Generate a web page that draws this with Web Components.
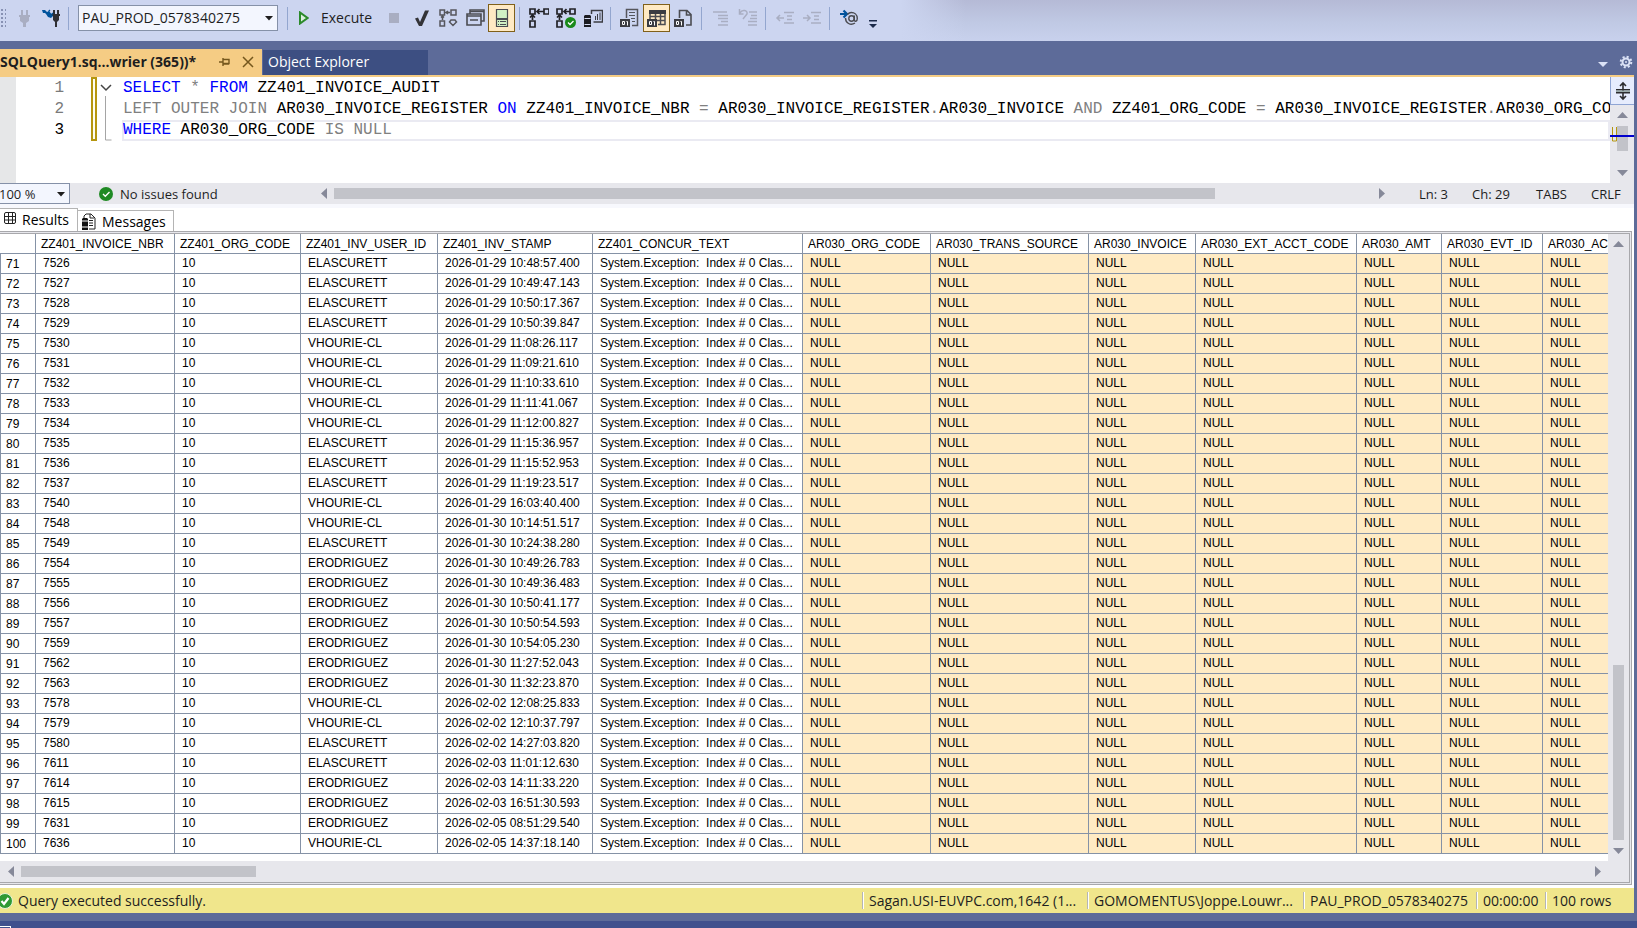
<!DOCTYPE html>
<html lang="en">
<head>
<meta charset="utf-8">
<title>SQLQuery1.sql</title>
<style>
  html, body {
    height: 100%;
    margin: 0;
  }
  body {
    font: 14px/20px "Open Sans", "Noto Sans", sans-serif;
    color: #1e1e1e;
    overflow: hidden;
    --chrome: #5d6b99;
    --toolbar: #ccd5f0;
    --active-tab: #f5cc84;
    --track: #e7e7ec;
    --thumb: #c2c3c9;
    --arrow: #868999;
    --grid-line: #8592a6;
  }
</style>
</head>
<body>
<query-window></query-window>

<script>
const BADGE = `<path d="M0 11h10v8H0z" fill="#3b3c42"/><path d="M2.500 13.500h2v3h-2zM6.500 13.500h1v4" fill="none" stroke="#fff"/>`;

const ICONS = {
  plug: `<g fill="#a9aec2"><path d="M7 2h2v5H7zM12 2h2v5h-2zM5 7h11v2h-1v4l-3 2v4H9v-4l-3-2V9H5z"/></g>`,
  plugs: `<g fill="#2f2f33"><path d="M12 2h2v4h-2zM16 2h2v4h-2zM10 6h9v2h-1v4l-2 2v5h-2v-5l-2-2V8h-2z"/></g><path d="M1 2h3l2 2 2-1 4 5-2 2-3-1-2-3-1-1H2z" fill="#00539c"/><path d="M7.500 3.500L9 2M10.500 6.500L12 5" stroke="#00539c" stroke-width="1.200"/>`,
  stop: `<path d="M5 5h10v10H5z" fill="#a9aec2"/>`,
  check: `<path d="M4 10.500l3-1 2 4.500 5-11.500h4L11 18H8z" fill="#333337"/>`,
  plan: `<g fill="none" stroke="#55565c" stroke-width="1.500"><path d="M2 2h4.500v5H2zM13 2h5v5h-5zM2 13h4.500v5H2zM8 4.500h4M4.500 12V8M10 3l-2 1.500L10 6M3 9.500L4.500 8 6 9.500"/><path d="M13 12h4l1.500 2-3.500 3.500-3.500-3.500z"/></g>`,
  windows: `<g fill="none" stroke="#4b4c52" stroke-width="1.600"><path d="M5 6V2h14v11h-3"/><path d="M2 6h14v11H2z"/><path d="M2 8h14M5 3.500h14M5 12h8"/></g>`,
  pane: `<path d="M4.500 1.500h11v17h-11z" fill="#d1f0c4" stroke="#4b4c52" stroke-width="1.200"/><path d="M4 11h12" stroke="#4b4c52" stroke-width="2"/><path d="M6 13.500h1M8 13.500h6M6 16.500h1M8 16.500h6" stroke="#4b4c52"/>`,
  planLive: `<g fill="none" stroke="#222226" stroke-width="1.700"><path d="M1 1h5v5H1zM15 1h5v5h-5zM1 13h5v6H1zM8 3.500h7M3.500 12V7M10.500 1L8 3.500 10.500 6M1 9.500L3.500 7 6 9.500"/></g>`,
  planOk: `<g fill="none" stroke="#222226" stroke-width="1.700"><path d="M1 1h5v5H1zM14 1h5v5h-5zM1 13h5v6H1zM8 3.500h6M3.500 12V7M10.500 1L8 3.500 10.500 6M1 9.500L3.500 7 6 9.500"/></g><circle cx="14.500" cy="14.500" r="5.500" fill="#1a8a1a"/><path d="M12 14.500l2 2 3.500-3.500" fill="none" stroke="#fff" stroke-width="1.300"/>`,
  stats: `<path d="M8.500 6V2.500h11v11.500h-9" fill="none" stroke="#3b3c42" stroke-width="1.500"/><path d="M12.500 8v4M14.500 6v6M17 4.500V12" stroke="#3b3c42"/><path d="M1 8l1-1h5l1 1v11H1z" fill="#1b1c22"/><path d="M1.500 10.500h6M1.500 16.500h6" stroke="#d6dcf2"/>`,
  toText: `<path d="M6.500 10V1.500h11v16H12" fill="none" stroke="#55565c" stroke-width="1.500"/><path d="M9 4.500h6M9 7.500h6M11 10.500h4M12 13.500h3" stroke="#55565c"/>${BADGE}`,
  toGrid: `<path d="M3 3v8M3 8.500h15M10 12.500h8M8.500 4v7M13.500 4v12.500M18 4v12.500h-7" fill="none" stroke="#4b4c52" stroke-width="1.500"/><path d="M2 2h17v4H2z" fill="#3b3c42"/>${BADGE}`,
  toFile: `<path d="M5.500 10V2.500H13l4 4v10.500h-5M12.500 3v4h5" fill="none" stroke="#4b4c52" stroke-width="1.600"/>${BADGE}`,
  comment: `<path d="M2 4h14M7 7.500h10M7 10.500h10M10 13.500h7M7 17h10" stroke="#a9aec2" stroke-width="1.500"/>`,
  uncomment: `<path d="M11 4h8M13 7.500h6M12 10.500h7M10 13.500h9M10 17h9M1.500 1v5h4M2 5c2-4 8-3 7 1l-4 5" fill="none" stroke="#a9aec2" stroke-width="1.500"/>`,
  outdent: `<path d="M9 4.500h10M12 8h5M12 11.500h5M9 15h10M9 10H2M5 7l-3 3 3 3" fill="none" stroke="#a9aec2" stroke-width="1.500"/>`,
  indent: `<path d="M9 4.500h10M12 8h5M12 11.500h5M9 15h10M1 10h7M5 7l3 3-3 3" fill="none" stroke="#a9aec2" stroke-width="1.500"/>`,
  params: `<path d="M1 6h6M4.500 2.500L8 6l-3.500 3.500" fill="none" stroke="#00539c" stroke-width="2.200"/><g fill="none" stroke="#4b4c52" stroke-width="1.400"><circle cx="12.500" cy="10.500" r="2.700"/><path d="M15.300 7.500v4c0 3 3 2 3-1 0-4-3-6-6-6-2 0-3 1-4 2M6.500 10c0 5 5 8 9.500 5"/></g>`,
  gear: `<circle cx="10" cy="10" r="3.500" fill="none" stroke="#dbe2f6" stroke-width="2"/><circle cx="10" cy="10" r="5.300" fill="none" stroke="#dbe2f6" stroke-width="2" stroke-dasharray="2.100 2.060"/><circle cx="10" cy="10" r="1" fill="#dbe2f6"/>`,
  pin: `<path d="M5 10h4M9 6v8M9 7.500h6v4H9M9 12h6" fill="none" stroke="#75571d" stroke-width="1.400"/>`,
  close: `<path d="M5 5l10 10M15 5L5 15" stroke="#75571d" stroke-width="1.500"/>`,
  ok: `<circle cx="10" cy="10" r="7" fill="#1f8a24"/><path d="M7 10l2.300 2.300L13.500 8" fill="none" stroke="#fff" stroke-width="1.300"/>`,
  done: `<circle cx="10" cy="10" r="7.500" fill="#2f9a35" stroke="#e7f3dc"/><path d="M6.500 10l2.500 3 4.500-6" fill="none" stroke="#fff" stroke-width="2.200"/>`,
  grid: `<rect x="4.500" y="2.500" width="11" height="11" rx="1.500" fill="none" stroke="#222"/><path d="M8.500 2v12M12.500 2v12M4 6.500h12M4 10h12" stroke="#222"/>`,
  messages: `<path d="M6 6V4l2-2h5l4 4v11h-6M12 2v4h4" fill="none" stroke="#222"/><path d="M11 8.500h4M11 11h4M11 13.500h4" stroke="#222"/><path d="M4 7l1-1h4l1 1v11H4z" fill="#111"/><path d="M4 9h6M4 15h6" stroke="#fff"/>`,
  split: `<path d="M10 2v16M7 5l3-3 3 3M7 15l3 3 3-3" fill="none" stroke="#2d2d30" stroke-width="1.600"/><path d="M3 8h14v1.500H3zM3 11h14v1.500H3z" fill="#2d2d30"/><path d="M3 9.500h14V11H3z" fill="#9aa"/>`
};

class UiIcon extends HTMLElement {
  connectedCallback() {
    this.attachShadow({ mode: "open" }).innerHTML = `
      <style>
        :host { display: inline-flex; flex: none; width: 20px; height: 20px; }
        svg { width: 20px; height: 20px; }
      </style>
      <svg viewBox="0 0 20 20" aria-hidden="true">${ICONS[this.getAttribute("name")] || ""}</svg>`;
  }
}
customElements.define("ui-icon", UiIcon);

class ToolButton extends HTMLElement {
  connectedCallback() {
    this.attachShadow({ mode: "open" }).innerHTML = `
      <style>
        :host { display: flex; flex: none; }
        button {
          box-sizing: border-box;
          display: flex;
          align-items: center;
          justify-content: center;
          width: 27px;
          height: 28px;
          padding: 0;
          border: 1px solid transparent;
          background: none;
        }
        :host([pressed]) button {
          border-color: #80601a;
          background: #ffeac4;
        }
      </style>
      <button aria-label="${this.getAttribute("label")}" ${this.hasAttribute("off") ? "disabled" : ""}>
        <ui-icon name="${this.getAttribute("icon")}"></ui-icon>
      </button>`;
  }
}
customElements.define("tool-button", ToolButton);

class ComboBox extends HTMLElement {
  connectedCallback() {
    this.attachShadow({ mode: "open" }).innerHTML = `
      <style>
        :host { display: block; position: relative; flex: none; }
        select {
          box-sizing: border-box;
          width: 100%;
          height: 100%;
          padding: 0 20px 0 3px;
          border: 1px solid #8591a8;
          border-radius: 0;
          background: #f3f6fe;
          color: inherit;
          font: inherit;
          appearance: none;
        }
        svg {
          position: absolute;
          right: 5px;
          top: calc(50% - 2px);
          width: 8px;
          height: 5px;
          pointer-events: none;
        }
      </style>
      <select aria-label="${this.getAttribute("label")}"><option>${this.getAttribute("value")}</option></select>
      <svg viewBox="0 0 8 5"><path d="M0 0h8L4 4.500z" fill="#1e1e1e"/></svg>`;
  }
}
customElements.define("combo-box", ComboBox);

// start and size are percentages of the track
class ScrollBar extends HTMLElement {
  connectedCallback() {
    const vertical = this.hasAttribute("vertical");
    const back = vertical ? "M5 13h11l-5.500-6z" : "M14 5v11l-6-5.500z";
    const forward = vertical ? "M5 8h11l-5.500 6z" : "M8 5v11l6-5.500z";
    this.attachShadow({ mode: "open" }).innerHTML = `
      <style>
        :host {
          display: flex;
          flex-direction: ${vertical ? "column" : "row"};
          align-items: center;
          min-width: 21px;
          min-height: 21px;
          background: var(--track);
        }
        button { flex: none; width: 21px; height: 21px; padding: 0; border: 0; background: none; }
        svg { display: block; width: 21px; height: 21px; }
        path { fill: var(--arrow); }
        .track {
          display: flex;
          flex: 1;
          flex-direction: inherit;
          align-self: stretch;
          align-items: center;
        }
        .before { flex: 0 0 ${this.getAttribute("start")}%; }
        .thumb {
          flex: 0 0 ${this.getAttribute("size")}%;
          ${vertical ? "width" : "height"}: 11px;
          background: var(--thumb);
        }
      </style>
      <button aria-label="Back"><svg viewBox="0 0 21 21"><path d="${back}"/></svg></button>
      <div class="track"><div class="before"></div><div class="thumb"></div></div>
      <button aria-label="Forward"><svg viewBox="0 0 21 21"><path d="${forward}"/></svg></button>`;
  }
}
customElements.define("scroll-bar", ScrollBar);

class ToolBar extends HTMLElement {
  connectedCallback() {
    this.attachShadow({ mode: "open" }).innerHTML = `
      <style>
        :host {
          box-sizing: border-box;
          display: flex;
          flex: none;
          align-items: center;
          height: 41px;
          padding-bottom: 5px;
          background:
            linear-gradient(to right, var(--toolbar) 55%, transparent 59%),
            linear-gradient(#b5bad6, #c0c9e4 55%, #c8d1ed);
        }
        .grip {
          width: 6px;
          height: 20px;
          margin-right: 4px;
          background: radial-gradient(circle, #8791b3 1px, transparent 1px) 0 0 / 4px 4px;
        }
        i { flex: none; width: 1px; height: 23px; margin: 0 5px 0 4px; background: #93a6cf; }
        combo-box { width: 200px; height: 26px; margin: 0 5px 0 4px; }
        .execute {
          display: flex;
          align-items: center;
          gap: 12px;
          width: 87px;
          padding: 0 0 0 6px;
          border: 0;
          background: none;
          color: inherit;
          font: inherit;
        }
        .execute svg { flex: none; width: 10px; height: 14px; }
        .more { display: flex; margin-left: 6px; padding: 12px 0 0; border: 0; background: none; }
        .more svg { width: 10px; height: 8px; }
      </style>
      <div class="grip"></div>
      <tool-button icon="plug" label="Connect" off></tool-button>
      <tool-button icon="plugs" label="Change Connection"></tool-button>
      <i></i>
      <combo-box label="Available Databases" value="PAU_PROD_0578340275"></combo-box>
      <i></i>
      <button class="execute">
        <svg viewBox="0 0 10 14"><path d="M1 1.500v11L8.500 7z" fill="#dcefe0" stroke="#2b8a2b" stroke-width="2"/></svg>Execute
      </button>
      <tool-button icon="stop" label="Cancel Query" off></tool-button>
      <tool-button icon="check" label="Parse"></tool-button>
      <tool-button icon="plan" label="Estimated Plan"></tool-button>
      <tool-button icon="windows" label="Query Options"></tool-button>
      <tool-button icon="pane" label="IntelliSense" pressed></tool-button>
      <i></i>
      <tool-button icon="planLive" label="Actual Plan"></tool-button>
      <tool-button icon="planOk" label="Live Statistics"></tool-button>
      <tool-button icon="stats" label="Client Statistics"></tool-button>
      <i></i>
      <tool-button icon="toText" label="Results to Text"></tool-button>
      <tool-button icon="toGrid" label="Results to Grid" pressed></tool-button>
      <tool-button icon="toFile" label="Results to File"></tool-button>
      <i></i>
      <tool-button icon="comment" label="Comment" off></tool-button>
      <tool-button icon="uncomment" label="Uncomment" off></tool-button>
      <i></i>
      <tool-button icon="outdent" label="Decrease Indent" off></tool-button>
      <tool-button icon="indent" label="Increase Indent" off></tool-button>
      <i></i>
      <tool-button icon="params" label="Template Parameters"></tool-button>
      <button class="more" aria-label="Toolbar Options">
        <svg viewBox="0 0 10 8"><path d="M1 0h8v1.500H1zM1 4h8L5 8z" fill="#1b2a4a"/></svg>
      </button>`;
  }
}
customElements.define("tool-bar", ToolBar);

class DocumentTabs extends HTMLElement {
  connectedCallback() {
    this.attachShadow({ mode: "open" }).innerHTML = `
      <style>
        :host {
          display: flex;
          flex: none;
          align-items: stretch;
          height: 26px;
          margin-right: 3px;
          padding-top: 8px;
          border-bottom: 2px solid var(--active-tab);
        }
        button { padding: 0; border: 0; background: none; color: inherit; font: inherit; }
        .active {
          display: flex;
          align-items: center;
          box-sizing: border-box;
          width: 262px;
          background: var(--active-tab);
        }
        .active .name { flex: 1; text-align: left; font-weight: bold; white-space: nowrap; }
        .active .icon { display: flex; margin-right: 4px; }
        .other {
          width: 165px;
          margin: 1px auto 0 1px;
          padding: 0 0 2px 5px;
          background: #3d4f82;
          color: #fff;
          text-align: left;
        }
        .end { display: flex; align-items: center; }
        .end svg { width: 10px; height: 5px; margin: 4px 8px 0 0; }
        .end:last-child { margin-right: -2px; }
      </style>
      <div class="active">
        <button class="name">SQLQuery1.sq...wrier (365))*</button>
        <button class="icon" aria-label="Pin"><ui-icon name="pin"></ui-icon></button>
        <button class="icon" aria-label="Close"><ui-icon name="close"></ui-icon></button>
      </div>
      <button class="other">Object Explorer</button>
      <button class="end" aria-label="Active Files"><svg viewBox="0 0 10 5"><path d="M0 0h10L5 5z" fill="#dbe2f6"/></svg></button>
      <button class="end" aria-label="Settings"><ui-icon name="gear"></ui-icon></button>`;
  }
}
customElements.define("document-tabs", DocumentTabs);

class SqlEditor extends HTMLElement {
  connectedCallback() {
    this.attachShadow({ mode: "open" }).innerHTML = `
      <style>
        :host {
          display: grid;
          grid-template-columns: 16px 48px 27px 6px 25px minmax(0, 1fr) 24px;
          flex: none;
          height: 106px;
          background: #fff;
          font: 16px/21px "Liberation Mono", monospace;
        }
        .gutter { background: #e6e7e8; }
        .numbers { padding-top: 1px; color: #7a7a7a; text-align: right; }
        .numbers b { color: #000; font-weight: normal; }
        .changes {
          grid-column: 4;
          box-sizing: border-box;
          height: 64px;
          border: 2px solid #b5960f;
          background: #fffdf0;
        }
        .outline { width: 25px; height: 64px; }
        pre { margin: 0; padding-top: 1px; overflow: hidden; color: #000; font: inherit; }
        .line { height: 21px; padding-left: 1px; }
        .current { box-shadow: inset 0 0 0 2px #eaeaf2; }
        .kw { color: #0000ff; }
        .op { color: #808080; }
        .side { position: relative; display: flex; flex-direction: column; align-items: stretch; background: var(--track); }
        .side button {
          display: flex;
          align-items: center;
          justify-content: center;
          box-sizing: border-box;
          height: 28px;
          padding: 0;
          border: solid #8fa5d4;
          border-width: 0 0 1px 1px;
          background: #e6ecfd;
        }
        scroll-bar { flex: 1; }
        .marks { position: absolute; left: 0; top: 50px; width: 24px; height: 16px; }
      </style>
      <div class="gutter"></div>
      <div class="numbers">1<br>2<br><b>3</b></div>
      <div class="changes"></div>
      <svg class="outline" viewBox="0 0 25 64">
        <path d="M4 8l5 5 5-5" fill="none" stroke="#444" stroke-width="1.500"/>
        <path d="M8.500 19v44h6" fill="none" stroke="#a5a5a5"/>
      </svg>
      <pre><div class="line"><span class="kw">SELECT</span> <span class="op">*</span> <span class="kw">FROM</span> ZZ401_INVOICE_AUDIT</div><div class="line"><span class="op">LEFT OUTER JOIN</span> AR030_INVOICE_REGISTER <span class="kw">ON</span> ZZ401_INVOICE_NBR <span class="op">=</span> AR030_INVOICE_REGISTER<span class="op">.</span>AR030_INVOICE <span class="op">AND</span> ZZ401_ORG_CODE <span class="op">=</span> AR030_INVOICE_REGISTER<span class="op">.</span>AR030_ORG_COD</div><div class="line current"><span class="kw">WHERE</span> AR030_ORG_CODE <span class="op">IS NULL</span></div></pre>
      <div class="side">
        <button aria-label="Split"><ui-icon name="split"></ui-icon></button>
        <scroll-bar vertical start="0" size="70"></scroll-bar>
        <svg class="marks" viewBox="0 0 24 16">
          <path d="M2.500 0v14h4V0" fill="none" stroke="#b5960f"/>
          <path d="M0 8h24v2H0z" fill="#0000cd"/>
        </svg>
      </div>`;
  }
}
customElements.define("sql-editor", SqlEditor);

class EditorStatus extends HTMLElement {
  connectedCallback() {
    this.attachShadow({ mode: "open" }).innerHTML = `
      <style>
        :host {
          display: flex;
          flex: none;
          align-items: center;
          height: 21px;
          border-bottom: 4px solid #f7f8fd;
          background: var(--track);
          font-size: 13px;
        }
        combo-box { width: 75px; height: 21px; margin-left: -5px; }
        .health { display: flex; align-items: center; gap: 4px; width: 217px; margin-left: 26px; }
        scroll-bar { flex: 1; }
        .place { display: flex; padding-left: 27px; }
        .place span { width: 53px; }
        .place .ch { width: 64px; }
        .place .tabs { width: 55px; }
        .place .eol { width: 43px; }
      </style>
      <combo-box label="Zoom" value="100 %"></combo-box>
      <div class="health"><ui-icon name="ok"></ui-icon>No issues found</div>
      <scroll-bar start="0" size="85"></scroll-bar>
      <div class="place"><span>Ln: 3</span><span class="ch">Ch: 29</span><span class="tabs">TABS</span><span class="eol">CRLF</span></div>`;
  }
}
customElements.define("editor-status", EditorStatus);

class ResultTabs extends HTMLElement {
  connectedCallback() {
    this.attachShadow({ mode: "open" }).innerHTML = `
      <style>
        :host { display: flex; flex: none; align-items: flex-end; height: 23px; background: #fff; }
        button {
          box-sizing: border-box;
          display: flex;
          align-items: center;
          height: 21px;
          padding: 0;
          border: solid #b4b4b4;
          border-width: 1px 1px 0 0;
          background: #fff;
          color: #000;
          font: inherit;
        }
        .results { width: 78px; height: 23px; gap: 2px; }
        .messages { width: 96px; padding-top: 2px; gap: 4px; }
      </style>
      <button class="results"><ui-icon name="grid"></ui-icon>Results</button>
      <button class="messages"><ui-icon name="messages"></ui-icon>Messages</button>`;
  }
}
customElements.define("result-tabs", ResultTabs);

const COLUMNS = [
  ["ZZ401_INVOICE_NBR", 139], ["ZZ401_ORG_CODE", 126], ["ZZ401_INV_USER_ID", 137],
  ["ZZ401_INV_STAMP", 155], ["ZZ401_CONCUR_TEXT", 210], ["AR030_ORG_CODE", 128],
  ["AR030_TRANS_SOURCE", 158], ["AR030_INVOICE", 107], ["AR030_EXT_ACCT_CODE", 161],
  ["AR030_AMT", 85], ["AR030_EVT_ID", 101], ["AR030_ACCT_CODE", 140]
];

const ROWS = `7526 ELASCURETT 2026-01-29 10:48:57.400
7527 ELASCURETT 2026-01-29 10:49:47.143
7528 ELASCURETT 2026-01-29 10:50:17.367
7529 ELASCURETT 2026-01-29 10:50:39.847
7530 VHOURIE-CL 2026-01-29 11:08:26.117
7531 VHOURIE-CL 2026-01-29 11:09:21.610
7532 VHOURIE-CL 2026-01-29 11:10:33.610
7533 VHOURIE-CL 2026-01-29 11:11:41.067
7534 VHOURIE-CL 2026-01-29 11:12:00.827
7535 ELASCURETT 2026-01-29 11:15:36.957
7536 ELASCURETT 2026-01-29 11:15:52.953
7537 ELASCURETT 2026-01-29 11:19:23.517
7540 VHOURIE-CL 2026-01-29 16:03:40.400
7548 VHOURIE-CL 2026-01-30 10:14:51.517
7549 ELASCURETT 2026-01-30 10:24:38.280
7554 ERODRIGUEZ 2026-01-30 10:49:26.783
7555 ERODRIGUEZ 2026-01-30 10:49:36.483
7556 ERODRIGUEZ 2026-01-30 10:50:41.177
7557 ERODRIGUEZ 2026-01-30 10:50:54.593
7559 ERODRIGUEZ 2026-01-30 10:54:05.230
7562 ERODRIGUEZ 2026-01-30 11:27:52.043
7563 ERODRIGUEZ 2026-01-30 11:32:23.870
7578 VHOURIE-CL 2026-02-02 12:08:25.833
7579 VHOURIE-CL 2026-02-02 12:10:37.797
7580 ELASCURETT 2026-02-02 14:27:03.820
7611 ELASCURETT 2026-02-03 11:01:12.630
7614 ERODRIGUEZ 2026-02-03 14:11:33.220
7615 ERODRIGUEZ 2026-02-03 16:51:30.593
7631 ERODRIGUEZ 2026-02-05 08:51:29.540
7636 VHOURIE-CL 2026-02-05 14:37:18.140`.split("\n");

class ResultGrid extends HTMLElement {
  connectedCallback() {
    this.attachShadow({ mode: "open" }).innerHTML = `
      <style>
        :host {
          display: grid;
          grid-template: minmax(0, 1fr) 21px / minmax(0, 1fr) 21px;
          flex: 1;
          min-height: 0;
          margin: 0 2px 3px 0;
          border: 3px double #a8a8ac;
          border-left: 0;
          background: var(--track);
          font: 12px/17px "Liberation Sans", Arial, sans-serif;
          color: #000;
        }
        .view { overflow: hidden; background: #fff; }
        table { table-layout: fixed; width: 1683px; border-collapse: separate; border-spacing: 0; }
        th, td {
          box-sizing: border-box;
          height: 20px;
          padding: 0 0 0 7px;
          border: solid var(--grid-line);
          border-width: 0 1px 1px 0;
          text-align: left;
          font-weight: normal;
          white-space: pre;
          overflow: hidden;
        }
        thead th { padding: 2px 0 0 5px; }
        tbody th { padding: 2px 0 0 5px; border-left-width: 1px; }
        .null { background: #ffebc4; }
      </style>
      <div class="view">
        <table>
          <colgroup><col style="width:36px">${COLUMNS.map(c => `<col style="width:${c[1]}px">`).join("")}</colgroup>
          <thead><tr><th></th>${COLUMNS.map(c => `<th>${c[0]}</th>`).join("")}</tr></thead>
          <tbody>${ROWS.map((row, i) => this.row(row, i + 71)).join("")}</tbody>
        </table>
      </div>
      <scroll-bar vertical start="70" size="30"></scroll-bar>
      <scroll-bar start="0" size="15"></scroll-bar>`;
  }

  row(text, number) {
    const [nbr, user, day, time] = text.split(" ");
    const cells = [nbr, "10", user, `${day} ${time}`, "System.Exception:  Index # 0 Clas..."];
    return `<tr><th>${number}</th>${cells.map(c => `<td>${c}</td>`).join("")}${'<td class="null">NULL</td>'.repeat(7)}</tr>`;
  }
}
customElements.define("result-grid", ResultGrid);

class QueryStatus extends HTMLElement {
  connectedCallback() {
    this.attachShadow({ mode: "open" }).innerHTML = `
      <style>
        :host {
          display: flex;
          flex: none;
          align-items: center;
          height: 25px;
          background: #f0e68c;
          color: #1e1e1e;
        }
        .message { display: flex; align-items: center; flex: 1; gap: 3px; margin-left: -5px; }
        .cell {
          box-sizing: border-box;
          flex: none;
          width: 225px;
          height: 17px;
          padding-left: 6px;
          border-left: 1px solid #b5b5b5;
          box-shadow: inset 1px 0 #fff;
          line-height: 17px;
          white-space: nowrap;
        }
        .user { width: 216px; }
        .db { width: 173px; }
        .time { width: 69px; }
        .rows { width: 89px; }
      </style>
      <div class="message"><ui-icon name="done"></ui-icon>Query executed successfully.</div>
      <div class="cell">Sagan.USI-EUVPC.com,1642 (1...</div>
      <div class="cell user">GOMOMENTUS\\Joppe.Louwr...</div>
      <div class="cell db">PAU_PROD_0578340275</div>
      <div class="cell time">00:00:00</div>
      <div class="cell rows">100 rows</div>`;
  }
}
customElements.define("query-status", QueryStatus);

class QueryWindow extends HTMLElement {
  connectedCallback() {
    this.attachShadow({ mode: "open" }).innerHTML = `
      <style>
        :host { display: flex; flex-direction: column; height: 100%; background: var(--chrome); }
        .document {
          display: flex;
          flex: 1;
          flex-direction: column;
          min-height: 0;
          margin: 0 3px 8px 0;
          background: #fff;
        }
        .bottom { flex: none; height: 7px; background: #40508d; overflow: hidden; }
        .bottom div { width: 10px; height: 8px; margin-top: 5px; border: solid #fff; border-width: 1px 1px 0 0; }
      </style>
      <tool-bar></tool-bar>
      <document-tabs></document-tabs>
      <div class="document">
        <sql-editor></sql-editor>
        <editor-status></editor-status>
        <result-tabs></result-tabs>
        <result-grid></result-grid>
        <query-status></query-status>
      </div>
      <div class="bottom"><div></div></div>`;
  }
}
customElements.define("query-window", QueryWindow);
</script>
</body>
</html>
